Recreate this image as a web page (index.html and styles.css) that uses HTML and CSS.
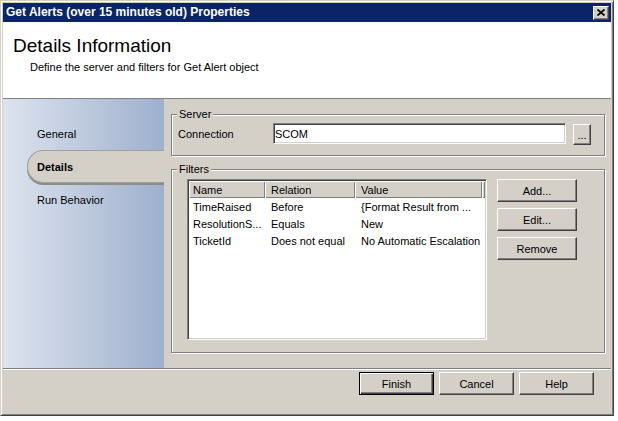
FILE: index.html
```html
<!DOCTYPE html>
<html>
<head>
<meta charset="utf-8">
<title>Get Alerts Properties</title>
<link rel="stylesheet" href="styles.css">
</head>
<body>
<div class="window">
  <div class="titlebar">
    <span class="title">Get Alerts (over 15 minutes old) Properties</span>
    <button class="close" aria-label="Close">
      <svg width="8" height="7" viewBox="0 0 8 7"><path d="M0.5 0.5L7.5 6.5M7.5 0.5L0.5 6.5" stroke="#000" stroke-width="1.7" fill="none"/></svg>
    </button>
  </div>
  <div class="header">
    <h1>Details Information</h1>
    <p>Define the server and filters for Get Alert object</p>
  </div>
  <div class="main">
    <nav class="nav">
      <div class="navitem">General</div>
      <div class="navitem active">Details</div>
      <div class="navitem">Run Behavior</div>
    </nav>
    <div class="content">
      <fieldset class="group server">
        <legend>Server</legend>
        <div class="row">
          <label class="lbl">Connection</label>
          <div class="textbox">SCOM</div>
          <button class="btn browse">...</button>
        </div>
      </fieldset>
      <fieldset class="group filters">
        <legend>Filters</legend>
        <div class="filters-body">
          <div class="listview">
            <div class="lv-head">
              <div class="hc c1">Name</div>
              <div class="hc c2">Relation</div>
              <div class="hc c3">Value</div>
              <div class="hc c4"></div>
            </div>
            <div class="lv-rows">
              <div class="lv-row"><span class="c1">TimeRaised</span><span class="c2">Before</span><span class="c3">{Format Result from ...</span></div>
              <div class="lv-row"><span class="c1">ResolutionS...</span><span class="c2">Equals</span><span class="c3">New</span></div>
              <div class="lv-row"><span class="c1">TicketId</span><span class="c2">Does not equal</span><span class="c3">No Automatic Escalation</span></div>
            </div>
          </div>
          <div class="sidebtns">
            <button class="btn side">Add...</button>
            <button class="btn side">Edit...</button>
            <button class="btn side">Remove</button>
          </div>
        </div>
      </fieldset>
    </div>
  </div>
  <div class="footer">
    <button class="btn foot default">Finish</button>
    <button class="btn foot">Cancel</button>
    <button class="btn foot">Help</button>
  </div>
</div>
</body>
</html>
```

FILE: styles.css
```css
* { box-sizing: border-box; }
body {
  margin: 0;
  background: #fff;
  font-family: "Liberation Sans", Arial, sans-serif;
  font-size: 11px;
  color: #000;
}
.window {
  width: 614px;
  height: 416px;
  background: #d4d0c8;
  border: 1px solid;
  border-color: #d4d0c8 #404040 #404040 #d4d0c8;
  padding: 2px;
  box-shadow: inset 1px 1px 0 #fff, inset -1px -1px 0 #808080;
  display: flex;
  flex-direction: column;
}
.titlebar {
  height: 19px;
  flex: none;
  background: #0a246a;
  display: flex;
  align-items: center;
  justify-content: space-between;
  padding: 0 2px 0 3px;
}
.title {
  color: #fff;
  font-weight: bold;
  font-size: 12px;
  line-height: 19px;
}
.close {
  width: 16px;
  height: 14px;
  padding: 0;
  margin: 0;
  background: #d4d0c8;
  border: 1px solid;
  border-color: #fff #404040 #404040 #fff;
  box-shadow: inset -1px -1px 0 #808080;
  display: flex;
  align-items: center;
  justify-content: center;
}
.close svg { display: block; }
.header {
  height: 77px;
  flex: none;
  background: #fff;
  border-bottom: 1px solid #808080;
  padding: 13px 0 0 10px;
}
.header h1 {
  margin: 0;
  font-weight: normal;
  font-size: 19px;
  line-height: 22px;
}
.header p {
  margin: 4px 0 0 17px;
  line-height: 13px;
}
.main {
  height: 269px;
  flex: none;
  display: flex;
}
.nav {
  width: 161px;
  flex: none;
  background: linear-gradient(to right, #dde3ef, #9eb0cc);
  padding-top: 18px;
}
.navitem {
  height: 33px;
  line-height: 34px;
  padding-left: 34px;
}
.navitem.active {
  margin-left: 24px;
  padding-left: 9px;
  line-height: 32px;
  font-weight: bold;
  background: #d4d0c8;
  border: 1px solid #a09f9a;
  border-right: none;
  border-radius: 16px 0 0 16px;
  box-shadow: 0 2px 0 #8e8d88;
}
.content {
  flex: 1;
  padding: 9px 6px 0 7px;
}
.group {
  margin: 0;
  min-width: 0;
  border: 1px solid #808080;
  box-shadow: 1px 1px 0 #fff, inset 1px 1px 0 #fff;
}
.group legend {
  padding: 0 2px;
  line-height: 13px;
  background: #d4d0c8;
}
.server {
  padding: 2px 5px 10px 5px;
}
.row {
  display: flex;
  align-items: flex-start;
  height: 22px;
}
.lbl {
  width: 96px;
  padding-left: 1px;
  line-height: 23px;
}
.textbox {
  width: 293px;
  height: 21px;
  background: #fff;
  border: 1px solid;
  border-color: #808080 #fff #fff #808080;
  box-shadow: inset 1px 1px 0 #404040, inset -1px -1px 0 #d4d0c8;
  padding-left: 1px;
  line-height: 20px;
}
.btn {
  font-family: "Liberation Sans", Arial, sans-serif;
  font-size: 11px;
  color: #000;
  background: #d4d0c8;
  border: 1px solid;
  border-color: #fff #404040 #404040 #fff;
  box-shadow: inset -1px -1px 0 #808080;
  padding: 0;
  margin: 0;
}
.browse {
  width: 18px;
  height: 21px;
  margin-left: 7px;
  margin-top: 1px;
}
.filters {
  margin-top: 7px;
  padding: 3px 5px 12px 5px;
}
.filters-body {
  display: flex;
  align-items: flex-start;
  padding-left: 10px;
}
.listview {
  width: 300px;
  height: 161px;
  flex: none;
  background: #fff;
  border: 1px solid;
  border-color: #808080 #fff #fff #808080;
  box-shadow: inset 1px 1px 0 #404040, inset -1px -1px 0 #d4d0c8;
  padding: 1px;
}
.lv-head {
  display: flex;
  height: 17px;
}
.hc {
  height: 17px;
  line-height: 18px;
  background: #d4d0c8;
  box-shadow: inset 1px 1px 0 #fff, inset -1px -1px 0 #808080;
}
.c1 { width: 76px; padding-left: 4px; }
.c2 { width: 90px; padding-left: 6px; }
.c3 { width: 127px; padding-left: 6px; }
.c4 { flex: 1; }
.lv-rows { padding-top: 1px; }
.lv-row {
  display: flex;
  height: 17px;
  line-height: 17px;
  white-space: nowrap;
}
.lv-row span { overflow: hidden; flex: none; }
.sidebtns {
  display: flex;
  flex-direction: column;
  gap: 6px;
  margin-left: 10px;
}
.side {
  width: 80px;
  height: 23px;
}
.footer {
  height: 45px;
  flex: none;
  border-top: 1px solid #808080;
  box-shadow: inset 0 1px 0 #fff;
  display: flex;
  justify-content: flex-end;
  gap: 5px;
  padding: 3px 17px 0 0;
}
.foot {
  width: 75px;
  height: 23px;
}
.default {
  border: 1px solid #000;
  box-shadow: inset 1px 1px 0 #fff, inset -1px -1px 0 #404040, inset -2px -2px 0 #808080;
}
```
